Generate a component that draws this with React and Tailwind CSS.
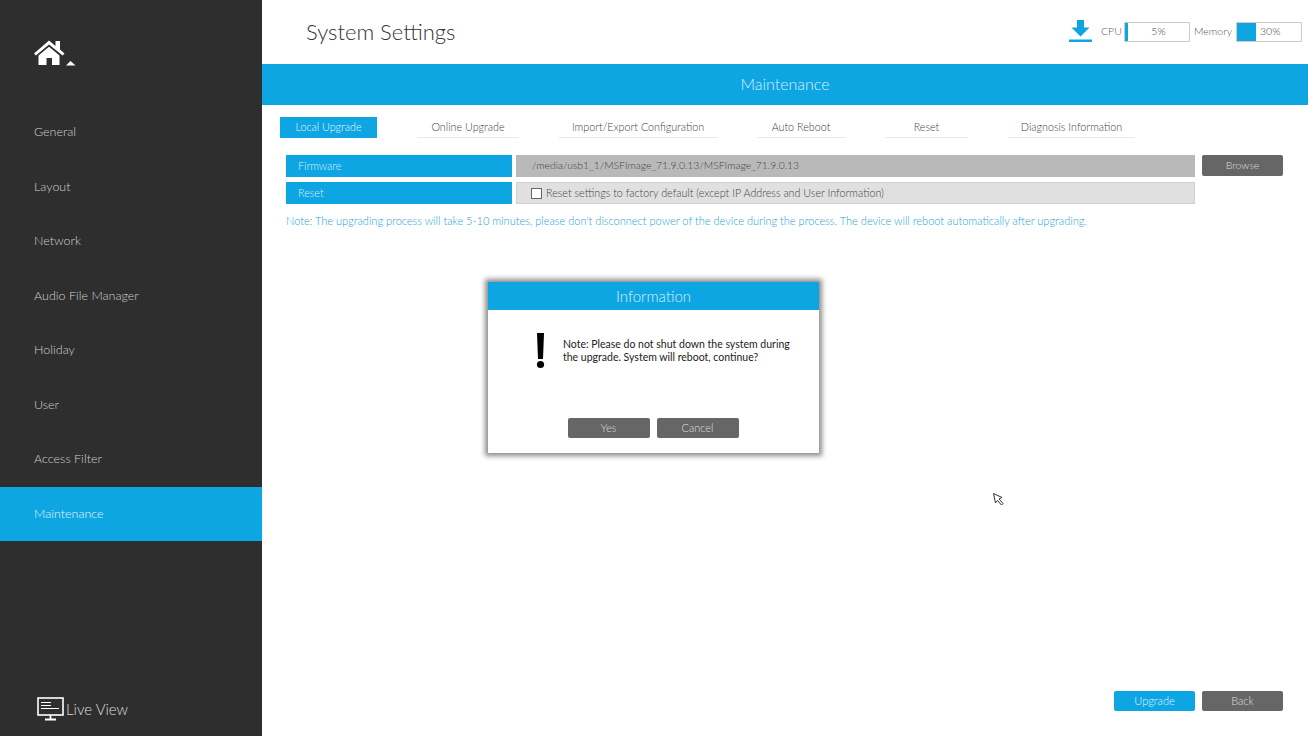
const menu = ['General', 'Layout', 'Network', 'Audio File Manager', 'Holiday', 'User', 'Access Filter', 'Maintenance'];

const tabs = [
  { label: 'Local Upgrade', width: 'w-[97px]', active: true },
  { label: 'Online Upgrade', width: 'w-[102px]' },
  { label: 'Import/Export Configuration', width: 'w-[158px]' },
  { label: 'Auto Reboot', width: 'w-[88px]' },
  { label: 'Reset', width: 'w-[83px]' },
  { label: 'Diagnosis Information', width: 'w-[127px]' },
];

function HomeIcon() {
  return (
    <svg width="42" height="26" viewBox="0 0 42 26" fill="white">
      <path d="M15 0.5 L21.5 6 V1 H26 V9.5 L30.5 13.5 L28.6 15.6 L15 4.6 L1.9 15.6 L0 13.5 Z" />
      <path d="M4.5 15.5 L15 6.8 L25.5 15.5 V25 H18 V18 H12.5 V25 H4.5 Z" />
      <path d="M36.5 21 L41.5 25.5 H32 Z" />
    </svg>
  );
}

function MonitorIcon() {
  return (
    <svg width="27" height="24" viewBox="0 0 27 24" fill="none" stroke="white">
      <rect x="1" y="1" width="25" height="17" strokeWidth="1.6" />
      <path d="M4 5.5 H14 M4 8.5 H14 M4 11.5 H22" strokeWidth="1.2" />
      <path d="M13.5 18 V22 M8 22.5 H19" strokeWidth="1.8" />
    </svg>
  );
}

function DownloadIcon() {
  return (
    <svg width="23" height="22" viewBox="0 0 23 22" fill="#0ea5e3">
      <path d="M8 0 H15 V7.5 H20.5 L11.5 16.5 L2.5 7.5 H8 Z" />
      <rect x="0" y="19.5" width="23" height="2.5" />
    </svg>
  );
}

function Meter({ label, value, fill, labelWidth, align }) {
  return (
    <>
      <span className={`text-right text-[10.5px] text-[#555] ${labelWidth}`}>{label}</span>
      <div className="flex h-[20px] w-[66px] items-center border border-[#ccc]">
        <div className={`h-full shrink-0 bg-[#0ea5e3] ${fill}`} />
        <span className={`flex-1 text-[10.5px] text-[#444] ${align}`}>{value}</span>
      </div>
    </>
  );
}

function GrayButton({ children, className = '' }) {
  return (
    <button className={`h-[21px] w-[81px] rounded-[2px] bg-[#666] text-[11px] text-[#ddd] ${className}`}>
      {children}
    </button>
  );
}

export default function App() {
  return (
    <div className="relative flex h-[736px] w-[1308px] overflow-hidden bg-white font-['Lato',sans-serif] font-light">
      {/* sidebar */}
      <aside className="flex w-[262px] shrink-0 flex-col bg-[#2e2e2e]">
        <div className="h-[105px] pl-[34px] pt-[40px]">
          <HomeIcon />
        </div>
        {menu.map((item) => (
          <div
            key={item}
            className={`flex h-[54.5px] items-center pl-[34px] pt-[1px] text-[12.5px] ${
              item === 'Maintenance' ? 'bg-[#0ea5e3] text-[#e4f5fc]' : 'text-[#d0d0d0]'
            }`}>
            {item}
          </div>
        ))}
        <div className="mt-auto flex h-[54px] items-center pl-[37px] text-[15px] text-[#dcdcdc]">
          <MonitorIcon />
          <span className="ml-[2px]">Live View</span>
        </div>
      </aside>

      <main className="flex min-w-0 flex-1 flex-col">
        {/* top bar */}
        <header className="flex h-[64px] shrink-0 items-center pb-[1px] pl-[44px] pr-[6px]">
          <h1 className="text-[22px] text-[#333]">System Settings</h1>
          <div className="ml-auto flex items-center">
            <div className="mr-[9px] mt-[-1px]">
              <DownloadIcon />
            </div>
            <div className="flex items-center gap-[4px]">
              <Meter label="CPU" value="5%" fill="w-[3px]" labelWidth="w-[19px]" align="text-center" />
              <Meter label="Memory" value="30%" fill="w-[19px]" labelWidth="w-[38px]" align="pl-[4px]" />
            </div>
          </div>
        </header>

        <div className="flex h-[41px] shrink-0 items-center justify-center bg-[#0ea5e3] pb-[2px] text-[16px] text-[#d9f1fb]">
          Maintenance
        </div>

        {/* tabs */}
        <div className="mt-[12px] flex gap-[40px] pl-[18px]">
          {tabs.map((tab) => (
            <div
              key={tab.label}
              className={`flex h-[21px] items-center justify-center text-[10.75px] ${tab.width} ${
                tab.active ? 'bg-[#0ea5e3] text-[#e4f5fc]' : 'border-b border-[#e8e8e8] text-[#444]'
              }`}>
              {tab.label}
            </div>
          ))}
        </div>

        {/* form */}
        <div className="ml-[24px] mt-[17px] flex flex-col gap-[5px] text-[10.75px]">
          <div className="flex h-[22px]">
            <div className="flex w-[226px] items-center bg-[#0ea5e3] pl-[12px] text-[#d9f1fb]">Firmware</div>
            <div className="ml-[4px] flex w-[679px] items-center bg-[#b9b9b9] pl-[16px] text-[10.35px] text-[#444]">
              /media/usb1_1/MSFImage_71.9.0.13/MSFImage_71.9.0.13
            </div>
            <GrayButton className="ml-[7px] !text-[10.5px]">Browse</GrayButton>
          </div>
          <div className="flex h-[22px]">
            <div className="flex w-[226px] items-center bg-[#0ea5e3] pl-[12px] text-[#d9f1fb]">Reset</div>
            <div className="ml-[4px] flex w-[679px] items-center border border-[#d0d0d0] bg-[#e0e0e0] pl-[14px] text-[#444]">
              <span className="h-[11px] w-[11px] shrink-0 border border-[#666] bg-white" />
              <span className="ml-[4px]">Reset settings to factory default (except IP Address and User Information)</span>
            </div>
          </div>
        </div>

        <p className="ml-[24px] mt-[9px] text-[11px] text-[#1fa3d6]">
          Note: The upgrading process will take 5-10 minutes, please don't disconnect power of the device during the process. The device will reboot automatically after upgrading.
        </p>

        <div className="mb-[25px] mr-[25px] mt-auto flex justify-end gap-[7px]">
          <GrayButton className="!h-[20px] !bg-[#0ea5e3] !text-[#e4f5fc]">Upgrade</GrayButton>
          <GrayButton className="!h-[20px]">Back</GrayButton>
        </div>
      </main>

      {/* dialog */}
      <div className="absolute left-[488px] top-[282px] flex h-[171px] w-[331px] flex-col bg-white shadow-[0_0_5px_3px_rgba(0,0,0,0.45)]">
        <div className="flex h-[28px] items-center justify-center bg-[#0ea5e3] text-[15px] text-[#d9f1fb]">
          Information
        </div>
        <div className="flex pl-[48px] pt-[23px]">
          <svg width="9" height="36" viewBox="0 0 9 36" fill="black" className="shrink-0">
            <path d="M1 0 H8 L7 26 H2 Z" />
            <circle cx="4.5" cy="31.5" r="3.6" />
          </svg>
          <p className="ml-[18px] mt-[5px] w-[240px] text-[10.5px] font-normal leading-[13px] text-[#222]">
            Note: Please do not shut down the system during the upgrade. System will reboot, continue?
          </p>
        </div>
        <div className="mb-[15px] mt-auto flex justify-center gap-[7px] pr-[1px]">
          <GrayButton className="!h-[20px] !w-[82px]">Yes</GrayButton>
          <GrayButton className="!h-[20px] !w-[82px]">Cancel</GrayButton>
        </div>
      </div>

      {/* mouse pointer */}
      <svg className="absolute left-[993px] top-[493px]" width="11" height="13" viewBox="0 0 11 13" fill="white" stroke="#333" strokeWidth="1">
        <path d="M0.5 0.5 L9 4.5 L6 6 L10 10.5 L8.5 12 L4.5 7.5 L2.5 10 Z" />
      </svg>
    </div>
  );
}
